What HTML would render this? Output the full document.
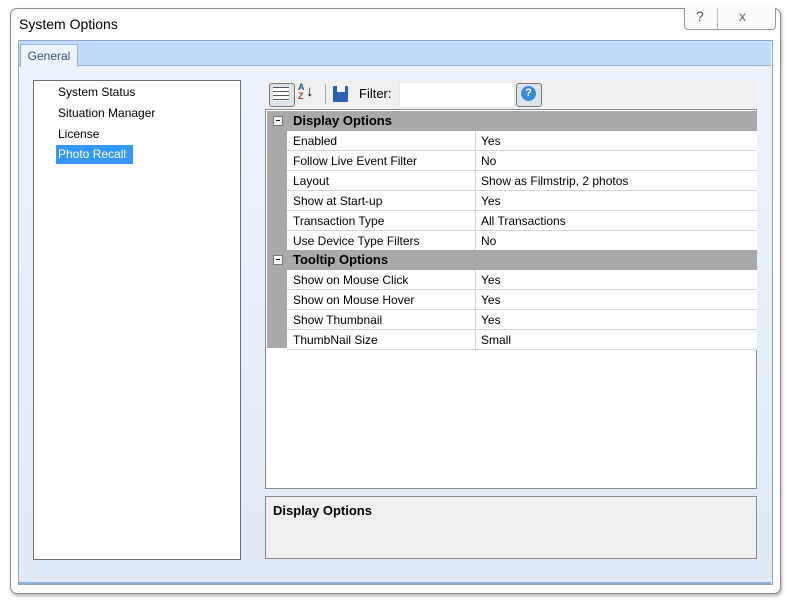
<!DOCTYPE html><html><head><style>
body{margin:0;width:789px;height:602px;background:#fff;font-family:"Liberation Sans",sans-serif;position:relative;overflow:hidden}
.a{position:absolute}
.win{left:10px;top:8px;width:769px;height:584px;border:1px solid #8a8a8a;border-radius:7px;background:#fff;box-shadow:1px 2px 3px rgba(0,0,0,.3)}
.row{position:absolute;left:287px;width:470px;height:19px;border-bottom:1px solid #d4d4d4;font-size:12px;color:#000;background:#fff}
.row span{position:absolute;top:3px}
.row .v{left:194px}
.row .n{left:6px}
.row:before{content:"";position:absolute;left:188px;top:0;bottom:-1px;width:1px;background:#d4d4d4}
.cat{position:absolute;left:267px;width:490px;height:19px;background:#a9a9a9;font-weight:bold;font-size:13px;border-bottom:1px solid #a9a9a9}
.cat span{position:absolute;left:26px;top:2px}
.cat i{position:absolute;left:6px;top:5px;width:8px;height:8px;background:#f4f4f4;border:1px solid #777}
.cat i:after{content:"";position:absolute;left:2px;top:3px;width:4px;height:1px;background:#000}
</style></head><body>
<div class="a win"></div>
<div class="a" style="left:19px;top:16px;font-size:14px;color:#000">System Options</div>
<div class="a" style="left:684px;top:8px;width:90px;height:21px;border:1px solid #999;border-top:none;border-radius:0 0 4px 4px;background:#fafafa"></div>
<div class="a" style="left:717px;top:8px;width:1px;height:21px;background:#bbb"></div>
<div class="a" style="left:696px;top:8px;font-size:14px;color:#555">?</div>
<div class="a" style="left:739px;top:8px;font-size:14px;color:#666">x</div>
<div class="a" style="left:18px;top:40px;width:753px;height:543px;border:1px solid #8fa8c8;background:linear-gradient(#eef4fc,#e0e9f6)"></div>
<div class="a" style="left:19px;top:41px;width:752px;height:24px;background:#c2dbf8;border-bottom:1px solid #96b5dc"></div>
<div class="a" style="left:20px;top:44px;width:56px;height:22px;background:#eef4fc;border:1px solid #96b5dc;border-bottom:none;border-radius:2px 2px 0 0;font-size:12px;color:#2f4f7f;line-height:22px;text-align:center">General</div>
<div class="a" style="left:19px;top:582px;width:752px;height:2px;background:#8fb0da"></div>
<div class="a" style="left:33px;top:80px;width:206px;height:478px;border:1px solid #6e6e6e;background:#fff;font-size:12px"></div>
<div class="a" style="left:58px;top:85px;font-size:12px">System Status</div>
<div class="a" style="left:58px;top:106px;font-size:12px">Situation Manager</div>
<div class="a" style="left:58px;top:127px;font-size:12px">License</div>
<div class="a" style="left:56px;top:145px;width:77px;height:19px;background:#3399ff;color:#fff;font-size:12px;line-height:19px;padding-left:2px;box-sizing:border-box">Photo Recall</div>
<div class="a" style="left:265px;top:80px;width:492px;height:28px;background:#f0f0f0"></div>
<div class="a" style="left:269px;top:83px;width:24px;height:22px;border:1px solid #777;border-radius:3px;background:#dde3ea"></div>
<div class="a" style="left:273px;top:87px;width:16px;height:14px;background:repeating-linear-gradient(#555 0 1px,#fff 1px 4px)"></div>
<div class="a" style="left:298px;top:83px;font-size:9px;line-height:9px;color:#2255aa;font-weight:bold">A<br><span style="color:#c03030">Z</span></div>
<div class="a" style="left:306px;top:83px;font-size:15px">↓</div>
<div class="a" style="left:325px;top:84px;width:1px;height:20px;background:#aaa"></div>
<div class="a" style="left:333px;top:86px;width:15px;height:16px;background:#2b63b0;border-radius:1px"></div>
<div class="a" style="left:337px;top:86px;width:8px;height:6px;background:#fff"></div>
<div class="a" style="left:359px;top:86px;font-size:13px">Filter:</div>
<div class="a" style="left:399px;top:82px;width:114px;height:24px;background:#fff;border:1px solid #e8e8e8"></div>
<div class="a" style="left:516px;top:83px;width:24px;height:22px;border:1px solid #777;border-radius:3px;background:#dde3ea"></div>
<div class="a" style="left:521px;top:86px;width:15px;height:15px;border-radius:50%;background:#3a8ad8;color:#fff;font-size:11px;text-align:center;line-height:15px;font-weight:bold">?</div>
<div class="a" style="left:265px;top:109px;width:490px;height:378px;border:1px solid #8a8a8a;background:#fff"></div>
<div class="a" style="left:267px;top:111px;width:20px;height:237px;background:#a9a9a9"></div>
<div class="cat" style="top:111px"><i></i><span>Display Options</span></div>
<div class="row" style="top:131px"><span class="n">Enabled</span><span class="v">Yes</span></div>
<div class="row" style="top:151px"><span class="n">Follow Live Event Filter</span><span class="v">No</span></div>
<div class="row" style="top:171px"><span class="n">Layout</span><span class="v">Show as Filmstrip, 2 photos</span></div>
<div class="row" style="top:191px"><span class="n">Show at Start-up</span><span class="v">Yes</span></div>
<div class="row" style="top:211px"><span class="n">Transaction Type</span><span class="v">All Transactions</span></div>
<div class="row" style="top:231px"><span class="n">Use Device Type Filters</span><span class="v">No</span></div>
<div class="cat" style="top:250px"><i></i><span>Tooltip Options</span></div>
<div class="row" style="top:270px"><span class="n">Show on Mouse Click</span><span class="v">Yes</span></div>
<div class="row" style="top:290px"><span class="n">Show on Mouse Hover</span><span class="v">Yes</span></div>
<div class="row" style="top:310px"><span class="n">Show Thumbnail</span><span class="v">Yes</span></div>
<div class="row" style="top:330px"><span class="n">ThumbNail Size</span><span class="v">Small</span></div>
<div class="a" style="left:265px;top:496px;width:490px;height:61px;border:1px solid #8a8a8a;background:#f0f0f0"></div>
<div class="a" style="left:273px;top:503px;font-size:13px;font-weight:bold">Display Options</div>
</body></html>
